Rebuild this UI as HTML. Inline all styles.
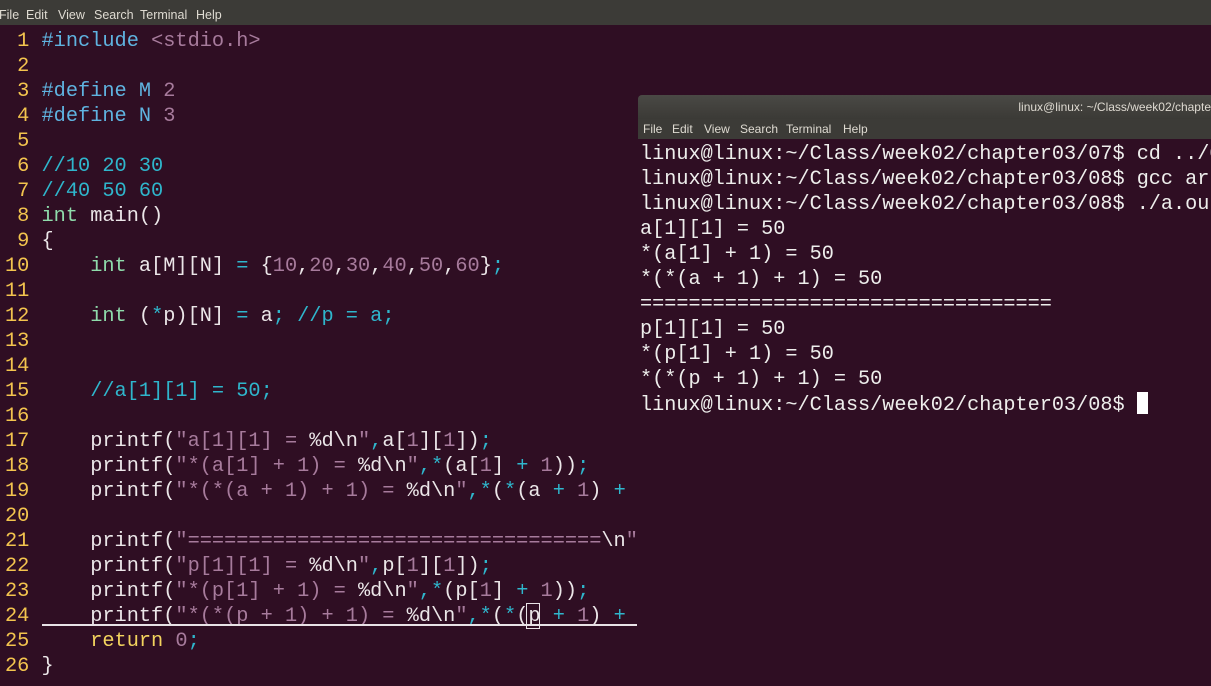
<!DOCTYPE html>
<html><head><meta charset="utf-8"><style>
*{margin:0;padding:0;box-sizing:border-box}
body{width:1211px;height:686px;overflow:hidden;background:#2f0e23;font-family:"Liberation Mono",monospace;position:relative}
.menubar{position:absolute;left:0;top:0;width:1211px;height:25px;background:#3c3b37;color:#dfdbd2;font:12.5px "Liberation Sans",sans-serif}
.menubar span{position:absolute;top:8px}
.ed{position:absolute;left:5px;top:29px;font-size:20.3px;line-height:25px;white-space:pre;color:#ebe6e8}
.n{color:#f3c44e}.k{color:#8fdcab}.p{color:#5fb3e0}.s{color:#a77b9c}.c{color:#2fb6cc}.o{color:#2fb6cc}
.term{position:absolute;left:638px;top:95px;width:573px;height:591px;background:#2f0e23}
.tt{height:24px;background:linear-gradient(#4a4945,#3b3a36);color:#dfdbd2;font:12px "Liberation Sans",sans-serif;text-align:right;padding:5px 0 0;white-space:nowrap;overflow:hidden;border-radius:4px 0 0 0}
.tm{height:20px;background:#3c3b37;color:#dfdbd2;font:12px "Liberation Sans",sans-serif;position:relative}
.tm span{position:absolute;top:3px}
.to{position:absolute;left:2px;top:47px;font-size:20.2px;line-height:25px;white-space:pre;color:#eeeeec}
.ul{position:absolute;left:42px;top:624px;width:595px;height:2px;background:#e8e2e6}
.cur{position:absolute;left:526px;top:603px;width:14px;height:26px;border:1.5px solid #e8e2e6}
.tc{display:inline-block;width:11px;height:22px;background:#fff;vertical-align:-4px}
</style></head><body>
<div class="menubar"><span style="left:-1px">File</span><span style="left:26px">Edit</span><span style="left:58px">View</span><span style="left:94px">Search</span><span style="left:140px">Terminal</span><span style="left:196px">Help</span></div>
<div class="ed"><span class="n"> 1</span> <span class="p">#include</span> <span class="s">&lt;stdio.h&gt;</span>
<span class="n"> 2</span>
<span class="n"> 3</span> <span class="p">#define</span> <span class="p">M</span> <span class="s">2</span>
<span class="n"> 4</span> <span class="p">#define</span> <span class="p">N</span> <span class="s">3</span>
<span class="n"> 5</span>
<span class="n"> 6</span> <span class="c">//10 20 30</span>
<span class="n"> 7</span> <span class="c">//40 50 60</span>
<span class="n"> 8</span> <span class="k">int</span> main()
<span class="n"> 9</span> {
<span class="n">10</span>     <span class="k">int</span> a[M][N] <span class="o">=</span> {<span class="s">10</span>,<span class="s">20</span>,<span class="s">30</span>,<span class="s">40</span>,<span class="s">50</span>,<span class="s">60</span>}<span class="o">;</span>
<span class="n">11</span>
<span class="n">12</span>     <span class="k">int</span> (<span class="o">*</span>p)[N] <span class="o">=</span> a<span class="o">;</span> <span class="c">//p = a;</span>
<span class="n">13</span>
<span class="n">14</span>
<span class="n">15</span>     <span class="c">//a[1][1] = 50;</span>
<span class="n">16</span>
<span class="n">17</span>     printf(<span class="s">"a[1][1] = </span>%d\n<span class="s">"</span><span class="o">,</span>a[<span class="s">1</span>][<span class="s">1</span>])<span class="o">;</span>
<span class="n">18</span>     printf(<span class="s">"*(a[1] + 1) = </span>%d\n<span class="s">"</span><span class="o">,*</span>(a[<span class="s">1</span>] <span class="o">+</span> <span class="s">1</span>))<span class="o">;</span>
<span class="n">19</span>     printf(<span class="s">"*(*(a + 1) + 1) = </span>%d\n<span class="s">"</span><span class="o">,*</span>(<span class="o">*</span>(a <span class="o">+</span> <span class="s">1</span>) <span class="o">+</span>
<span class="n">20</span>
<span class="n">21</span>     printf(<span class="s">"==================================</span>\n<span class="s">"</span>
<span class="n">22</span>     printf(<span class="s">"p[1][1] = </span>%d\n<span class="s">"</span><span class="o">,</span>p[<span class="s">1</span>][<span class="s">1</span>])<span class="o">;</span>
<span class="n">23</span>     printf(<span class="s">"*(p[1] + 1) = </span>%d\n<span class="s">"</span><span class="o">,*</span>(p[<span class="s">1</span>] <span class="o">+</span> <span class="s">1</span>))<span class="o">;</span>
<span class="n">24</span>     printf(<span class="s">"*(*(p + 1) + 1) = </span>%d\n<span class="s">"</span><span class="o">,*</span>(<span class="o">*</span>(p <span class="o">+</span> <span class="s">1</span>) <span class="o">+</span>
<span class="n">25</span>     <span style="color:#f3d35e">return</span> <span class="s">0</span><span class="o">;</span>
<span class="n">26</span> }</div>
<div class="ul"></div><div class="cur"></div>
<div class="term">
<div class="tt">linux@linux: ~/Class/week02/chapte</div>
<div class="tm"><span style="left:5px">File</span><span style="left:34px">Edit</span><span style="left:66px">View</span><span style="left:102px">Search</span><span style="left:148px">Terminal</span><span style="left:205px">Help</span></div>
<div class="to">linux@linux:~/Class/week02/chapter03/07$ cd ../0
linux@linux:~/Class/week02/chapter03/08$ gcc ar
linux@linux:~/Class/week02/chapter03/08$ ./a.out
a[1][1] = 50
*(a[1] + 1) = 50
*(*(a + 1) + 1) = 50
==================================
p[1][1] = 50
*(p[1] + 1) = 50
*(*(p + 1) + 1) = 50
linux@linux:~/Class/week02/chapter03/08$ <span class="tc"></span></div>
</div>
</body></html>
